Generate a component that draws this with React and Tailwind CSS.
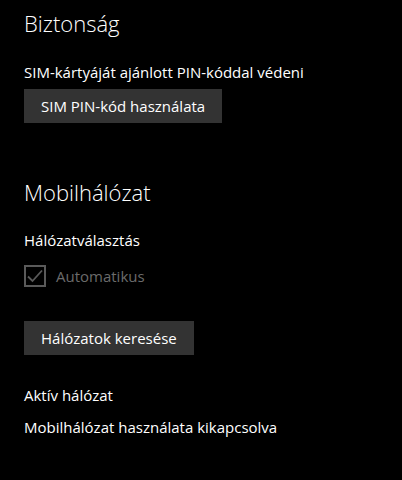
import React from "react";

// Mobilhálózat beállítások oldal
function Heading({ children, className = "" }) {
    return (
        <h2 className={`text-[22px] leading-[30px] font-light text-white ${className}`}>
            {children}
        </h2>
    );
}

function GrayButton({ children, className = "" }) {
    return (
        <button className={`h-[34px] px-[17px] bg-[#333333] text-white text-[15px] leading-[34px] ${className}`}>
            {children}
        </button>
    );
}

export default function App() {
    return (
        <div
            className="w-[402px] h-[480px] bg-black text-white px-6 pt-[8px] overflow-hidden"
            style={{ fontFamily: '"Open Sans", "Liberation Sans", sans-serif' }}
        >
            {/* Biztonság */}
            <Heading>Biztonság</Heading>
            <p className="mt-[24px] text-[15px] leading-[20px]">SIM-kártyáját ajánlott PIN-kóddal védeni</p>
            <GrayButton className="mt-[7px]">SIM PIN-kód használata</GrayButton>

            {/* Mobilhálózat */}
            <Heading className="mt-[54px]">Mobilhálózat</Heading>
            <p className="mt-[23px] text-[15px] leading-[20px]">Hálózatválasztás</p>
            <div className="mt-[14px] flex items-center gap-[10px] h-[24px]">
                <span className="w-[22px] h-[22px] border-2 border-[#5a5a5a] flex items-center justify-center">
                    <svg width="16" height="14" viewBox="0 0 16 14" fill="none">
                        <path d="M1 7.5 L5.5 12 L15 1.5" stroke="#5a5a5a" strokeWidth="1.8" />
                    </svg>
                </span>
                <span className="text-[15px] text-[#6b6b6b]">Automatikus</span>
            </div>
            <GrayButton className="mt-[33px]">Hálózatok keresése</GrayButton>

            <p className="mt-[30px] text-[15px] leading-[20px]">Aktív hálózat</p>
            <p className="mt-[12px] text-[15px] leading-[20px]">Mobilhálózat használata kikapcsolva</p>
        </div>
    );
}
